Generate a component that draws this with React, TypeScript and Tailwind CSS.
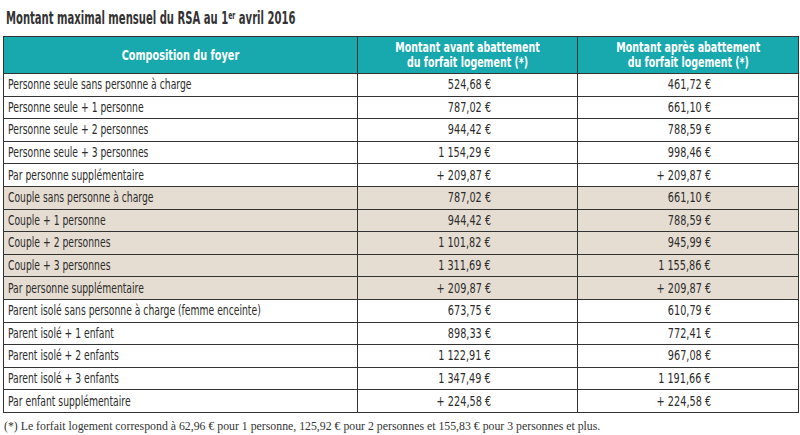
const rows: { label: string; avant: string; apres: string; beige?: boolean }[] = [
  { label: "Personne seule sans personne à charge", avant: "524,68 €", apres: "461,72 €" },
  { label: "Personne seule + 1 personne", avant: "787,02 €", apres: "661,10 €" },
  { label: "Personne seule + 2 personnes", avant: "944,42 €", apres: "788,59 €" },
  { label: "Personne seule + 3 personnes", avant: "1 154,29 €", apres: "998,46 €" },
  { label: "Par personne supplémentaire", avant: "+ 209,87 €", apres: "+ 209,87 €" },
  { label: "Couple sans personne à charge", avant: "787,02 €", apres: "661,10 €", beige: true },
  { label: "Couple + 1 personne", avant: "944,42 €", apres: "788,59 €", beige: true },
  { label: "Couple + 2 personnes", avant: "1 101,82 €", apres: "945,99 €", beige: true },
  { label: "Couple + 3 personnes", avant: "1 311,69 €", apres: "1 155,86 €", beige: true },
  { label: "Par personne supplémentaire", avant: "+ 209,87 €", apres: "+ 209,87 €", beige: true },
  { label: "Parent isolé sans personne à charge (femme enceinte)", avant: "673,75 €", apres: "610,79 €" },
  { label: "Parent isolé + 1 enfant", avant: "898,33 €", apres: "772,41 €" },
  { label: "Parent isolé + 2 enfants", avant: "1 122,91 €", apres: "967,08 €" },
  { label: "Parent isolé + 3 enfants", avant: "1 347,49 €", apres: "1 191,66 €" },
  { label: "Par enfant supplémentaire", avant: "+ 224,58 €", apres: "+ 224,58 €" },
];

const cond = "font-['Liberation_Sans_Narrow','DejaVu_Sans_Condensed',sans-serif]";

export default function App() {
  return (
    <div className={`w-[800px] h-[435px] bg-white text-[#2b2b2b] ${cond}`}>
      <h1 className="pt-[8px] pl-[6px] h-[36px] text-[18px] leading-[20px] font-bold text-[#333]">
        <span className="inline-block whitespace-nowrap origin-left scale-x-[0.62]">
          Montant maximal mensuel du RSA au 1<sup className="text-[11px]">er</sup> avril 2016
        </span>
      </h1>

      <table className="ml-[3px] w-[795px] border-collapse table-fixed">
        <colgroup>
          <col className="w-[354px]" />
          <col className="w-[220px]" />
          <col className="w-[221px]" />
        </colgroup>
        <thead>
          <tr className="h-[37px] bg-[#17a9ad] text-white text-[13.5px] leading-[15px] font-bold">
            <th className="border border-[#333] text-center">
              <span className="inline-block whitespace-nowrap origin-center scale-x-[0.8]">Composition du foyer</span>
            </th>
            <th className="border border-[#333] text-center">
              <span className="inline-block whitespace-nowrap origin-center scale-x-[0.78]">
                Montant avant abattement
                <br />
                du forfait logement (*)
              </span>
            </th>
            <th className="border border-[#333] text-center">
              <span className="inline-block whitespace-nowrap origin-center scale-x-[0.78]">
                Montant après abattement
                <br />
                du forfait logement (*)
              </span>
            </th>
          </tr>
        </thead>
        <tbody className="text-[13.5px] leading-[15px]">
          {rows.map((r, i) => (
            <tr key={i} className={`h-[22.6px] ${r.beige ? "bg-[#e6ddd2]" : "bg-white"}`}>
              <td className="border border-[#333] pl-[4px]">
                <span className="inline-block whitespace-nowrap origin-left scale-x-[0.76]">{r.label}</span>
              </td>
              <td className="border border-[#333] text-right pr-[86px]">
                <span className="inline-block whitespace-nowrap origin-right scale-x-[0.8]">{r.avant}</span>
              </td>
              <td className="border border-[#333] text-right pr-[87px]">
                <span className="inline-block whitespace-nowrap origin-right scale-x-[0.8]">{r.apres}</span>
              </td>
            </tr>
          ))}
        </tbody>
      </table>

      <p className="mt-[7px] pl-[4px] text-[11.8px] leading-[13px] text-[#333] font-['Liberation_Serif',serif] whitespace-nowrap">
        (*) Le forfait logement correspond à 62,96 € pour 1 personne, 125,92 € pour 2 personnes et 155,83 € pour 3 personnes et plus.
      </p>
    </div>
  );
}
